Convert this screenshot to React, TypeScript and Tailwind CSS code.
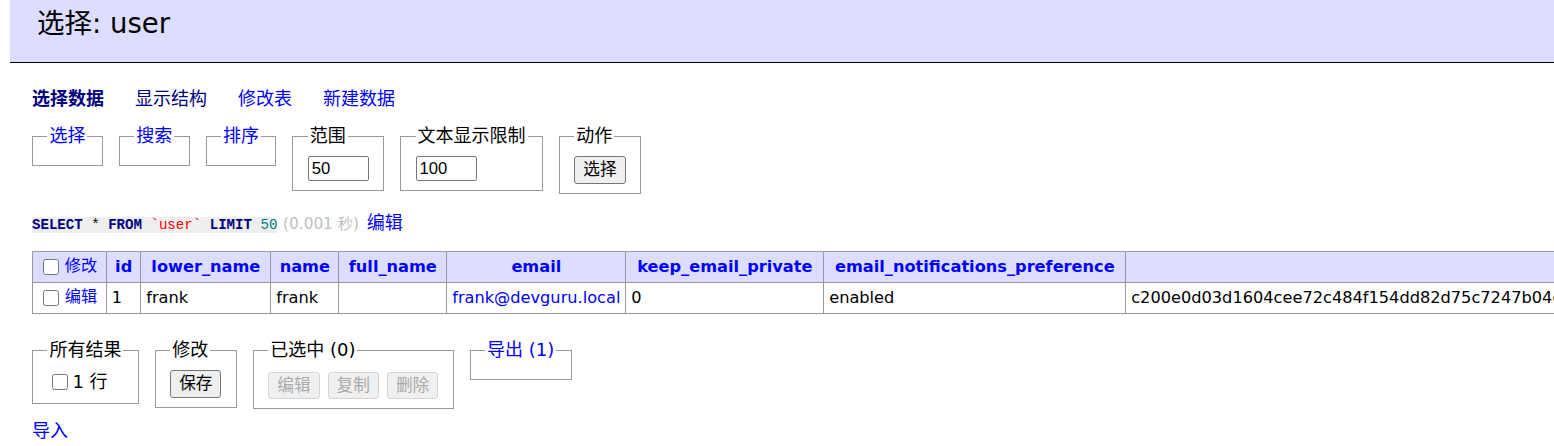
import React from "react";

const HASH =
  "c200e0d03d1604cee72c484f154dd82d75c7247b04ea971a5d1e4ab4cc16d8b1a6e3ad9b8ae1e43f9a8b5d4f5c7d2e0b1a9f3c2d1e";

function FS({
  legend,
  children,
  className = "",
}: {
  legend: React.ReactNode;
  children?: React.ReactNode;
  className?: string;
}) {
  return (
    <fieldset
      className={
        "border border-[#999] px-[14.4px] pt-[9px] pb-[9px] m-0 min-w-0 " +
        className
      }
    >
      <legend className="px-[2px]">{legend}</legend>
      {children}
    </fieldset>
  );
}

function Cb({ className = "" }: { className?: string }) {
  return (
    <input
      type="checkbox"
      className={
        "w-[16px] h-[16px] ml-[5px] mr-[4px] my-[3.75px] align-middle " +
        className
      }
    />
  );
}

export default function App() {
  const th =
    "border border-[#999] bg-[#ddf] px-[8.1px] py-[3.24px] font-bold text-center";
  const td = "border border-[#999] px-[4.86px] py-[3.24px] text-left";
  const btn =
    "h-[28px] px-[8px] border border-[#767676] rounded-[3px] bg-[#efefef] text-[16.67px] leading-[20px] text-black";
  const dbtn =
    "h-[27px] px-[8px] border border-[#d4d4d4] rounded-[3px] bg-[#f0f0f0] text-[16.67px] leading-[20px] text-[#a9a9a9]";
  const inp =
    "w-[61px] h-[25px] border border-[#767676] rounded-[2px] px-[3px] text-[16.67px] font-['Liberation_Sans','Noto_Sans_CJK_SC',sans-serif] bg-white";
  return (
    <div className="w-[1554px] h-[446px] overflow-hidden bg-white text-black text-[18px] leading-[1.25] font-['DejaVu_Sans','Noto_Sans_CJK_SC',sans-serif]">
      <h2 className="ml-[10px] h-[63px] bg-[#ddf] border-b border-black pl-[27px] pt-[7px] text-[27.5px] leading-[33.75px] font-normal">
        选择: user
      </h2>
      <div className="pl-[32px]">
        <p className="mt-[25px] flex gap-[31px]">
          <a className="font-bold text-[#000080]">选择数据</a>
          <a className="text-[#000080]">显示结构</a>
          <a className="text-[#0000ff]">修改表</a>
          <a className="text-[#0000ff]">新建数据</a>
        </p>
        <div className="mt-[14.4px] flex items-start gap-[16px]">
          <FS legend={<a className="text-[#0000ff]">选择</a>} />
          <FS legend={<a className="text-[#0000ff]">搜索</a>} />
          <FS legend={<a className="text-[#0000ff]">排序</a>} />
          <FS legend="范围">
            <input className={inp} defaultValue="50" />
          </FS>
          <FS legend="文本显示限制">
            <input className={inp} defaultValue="100" />
          </FS>
          <FS legend="动作">
            <button className={btn}>选择</button>
          </FS>
        </div>
        <p className="mt-[18px]">
          <code className="bg-[#eee] font-['Liberation_Mono',monospace] text-[14.1px]">
            <b className="text-[#000080]">SELECT</b> *{" "}
            <b className="text-[#000080]">FROM</b>{" "}
            <span className="text-[#ff0000]">`user`</span>{" "}
            <b className="text-[#000080]">LIMIT</b>{" "}
            <span className="text-[#008080]">50</span>
          </code>{" "}
          <span className="text-[15.3px] text-[#c0c0c0]">(0.001 秒)</span>{" "}
          <a className="ml-[2px] text-[#0000ff]">编辑</a>
        </p>
        <table className="w-max mt-[16px] border-collapse text-[16.2px] leading-[1.25] whitespace-nowrap">
          <thead>
            <tr>
              <td className="border border-[#999] bg-[#ddf] px-[4.86px] py-[3.24px] w-[74px]">
                <Cb />
                <a className="ml-[2px] text-[#0000ff]">修改</a>
              </td>
              <th className={th + " w-[34px]"}>
                <a className="text-[#0000ff]">id</a>
              </th>
              <th className={th + " w-[130px]"}>
                <a className="text-[#0000ff]">lower_name</a>
              </th>
              <th className={th + " w-[68px]"}>
                <a className="text-[#0000ff]">name</a>
              </th>
              <th className={th + " w-[108px]"}>
                <a className="text-[#0000ff]">full_name</a>
              </th>
              <th className={th + " w-[179px]"}>
                <a className="text-[#0000ff]">email</a>
              </th>
              <th className={th + " w-[198px]"}>
                <a className="text-[#0000ff]">keep_email_private</a>
              </th>
              <th className={th + " w-[302px]"}>
                <a className="text-[#0000ff]">email_notifications_preference</a>
              </th>
              <th className={th}>
                <a className="text-[#0000ff]">passwd</a>
              </th>
            </tr>
          </thead>
          <tbody>
            <tr>
              <td className={td}>
                <Cb />
                <a className="ml-[2px] text-[#0000ff]">编辑</a>
              </td>
              <td className={td}>1</td>
              <td className={td}>frank</td>
              <td className={td}>frank</td>
              <td className={td}></td>
              <td className={td}>
                <a className="text-[#0000ff]">frank@devguru.local</a>
              </td>
              <td className={td}>0</td>
              <td className={td}>enabled</td>
              <td className={td}>{HASH}</td>
            </tr>
          </tbody>
        </table>
        <div className="mt-[25px] flex items-start gap-[16px]">
          <FS legend="所有结果">
            <label className="flex items-center h-[24px]">
              <input type="checkbox" className="w-[16px] h-[16px] ml-[5px] mr-[4px]" />
              <span>1 行</span>
            </label>
          </FS>
          <FS legend="修改">
            <button className={btn}>保存</button>
          </FS>
          <FS legend="已选中 (0)">
            <div className="flex gap-[8px] pt-[2px]">
              <button className={dbtn} disabled>
                编辑
              </button>
              <button className={dbtn} disabled>
                复制
              </button>
              <button className={dbtn} disabled>
                删除
              </button>
            </div>
          </FS>
          <FS legend={<a className="text-[#0000ff]">导出 (1)</a>} />
        </div>
        <p className="mt-[11px]">
          <a className="text-[#0000ff]">导入</a>
        </p>
      </div>
    </div>
  );
}
